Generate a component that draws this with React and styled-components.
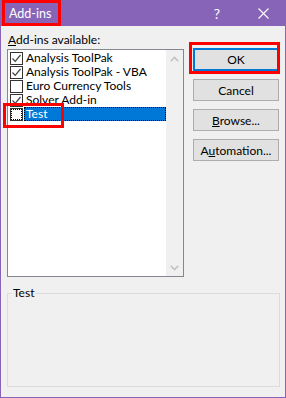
import React from "react";
import styled, { createGlobalStyle } from "styled-components";

const GlobalStyle = createGlobalStyle`
  html, body {
    margin: 0;
    padding: 0;
    background: #f0f0f0;
  }
  * {
    box-sizing: border-box;
  }
`;

const Window = styled.div`
  width: 286px;
  height: 398px;
  display: flex;
  flex-direction: column;
  background: #f0f0f0;
  border: 1px solid #8764b8;
  border-top: none;
  font-family: "Segoe UI", Lato, "Noto Sans", sans-serif;
  font-size: 12px;
  color: #000;
`;

const TitleBar = styled.div`
  height: 31px;
  margin: 0 -1px;
  background: #8764b8;
  color: #fff;
  display: flex;
  align-items: stretch;
  padding-left: 2px;
`;

const Highlight = styled.span`
  position: relative;
  display: flex;
  align-items: center;
  &::after {
    content: "";
    position: absolute;
    left: ${(p) => p.$l}px;
    top: ${(p) => p.$t}px;
    right: ${(p) => p.$r}px;
    bottom: ${(p) => p.$b}px;
    border: 3px solid #ff0000;
    pointer-events: none;
  }
`;

const Title = styled.span`
  padding: 0 10px 0 7px;
  font-size: 12.5px;
`;

const TitleButtons = styled.div`
  margin-left: auto;
  display: flex;
  align-items: center;
`;

const TitleButton = styled.span`
  width: 46px;
  display: flex;
  justify-content: center;
  align-items: center;
  font-size: 14px;
`;

const Body = styled.div`
  flex: 1;
  display: flex;
  flex-direction: column;
  padding: 7px 6px 10px 6px;
`;

const Main = styled.div`
  display: flex;
  gap: 9px;
`;

const LeftColumn = styled.div`
  display: flex;
  flex-direction: column;
`;

const Label = styled.div`
  height: 16px;
  line-height: 14px;
  padding-left: 1px;
`;

const U = styled.span`
  text-decoration: underline;
  text-underline-offset: 1px;
`;

const ListBox = styled.div`
  width: 177px;
  height: 228px;
  border: 1px solid #828790;
  background: #fff;
  display: flex;
`;

const Items = styled.div`
  flex: 1;
  padding: 1px 0 0 2px;
`;

const Item = styled.div`
  position: relative;
  height: 14px;
  display: flex;
  align-items: center;
`;

const CheckBox = styled.span`
  width: 13px;
  height: 13px;
  border: 1px solid #333;
  background: #fff;
  margin-right: 1px;
  display: flex;
  align-items: center;
  justify-content: center;
  flex-shrink: 0;
  outline: ${(p) => (p.$focus ? "1px dotted #000" : "none")};
  outline-offset: -2px;
`;

const ItemText = styled.span`
  flex: 1;
  height: 14px;
  line-height: 14px;
  padding-left: 2px;
  background: ${(p) => (p.$selected ? "#0078d7" : "transparent")};
  color: ${(p) => (p.$selected ? "#fff" : "#000")};
  outline: ${(p) => (p.$selected ? "1px dotted #000" : "none")};
  outline-offset: -1px;
`;

const AnnotationBox = styled.span`
  position: absolute;
  left: -7px;
  top: -4px;
  width: 61px;
  height: 25px;
  border: 3px solid #ff0000;
`;

const ScrollBar = styled.div`
  width: 17px;
  background: #f0f0f0;
  display: flex;
  flex-direction: column;
  justify-content: space-between;
  align-items: center;
  padding: 6px 0 5px;
`;

const RightColumn = styled.div`
  display: flex;
  flex-direction: column;
  gap: 8px;
  padding-top: 15px;
`;

const Button = styled.button`
  width: 86px;
  height: ${(p) => (p.$default ? 23 : 22)}px;
  background: #e1e1e1;
  border: ${(p) => (p.$default ? "2px solid #0078d7" : "1px solid #adadad")};
  font-family: inherit;
  font-size: 12px;
  color: #000;
  padding: 0;
  display: flex;
  align-items: center;
  justify-content: center;
`;

const GroupBox = styled.fieldset`
  margin: 10px 0 0;
  padding: 0;
  width: 273px;
  height: 100px;
  border: 1px solid #dcdcdc;
  border-radius: 0;
  & > legend {
    margin-left: 4px;
    padding: 0 1px;
    line-height: 12px;
    font-size: 12px;
  }
`;

const Check = () => (
  <svg width="11" height="11" viewBox="0 0 11 11">
    <path d="M1.5 5.5 L4.2 8.3 L9.5 2" fill="none" stroke="#404040" strokeWidth="1.2" />
  </svg>
);

const Chevron = ({ up }) => (
  <svg width="9" height="6" viewBox="0 0 9 6">
    <path
      d={up ? "M0.8 5.2 L4.5 1.5 L8.2 5.2" : "M0.8 0.8 L4.5 4.5 L8.2 0.8"}
      fill="none"
      stroke="#c2c2c2"
      strokeWidth="1.6"
    />
  </svg>
);

const items = [
  { name: "Analysis ToolPak", checked: true },
  { name: "Analysis ToolPak - VBA", checked: true },
  { name: "Euro Currency Tools", checked: false },
  { name: "Solver Add-in", checked: true },
  { name: "Test", checked: false, selected: true },
];

const App = () => (
  <>
    <GlobalStyle />
    <Window>
      <TitleBar>
        <Highlight $l={0} $t={0} $r={0} $b={0}>
          <Title>Add-ins</Title>
        </Highlight>
        <TitleButtons>
          <TitleButton>?</TitleButton>
          <TitleButton>
            <svg width="11" height="11" viewBox="0 0 11 11">
              <path d="M0.5 0.5 L10.5 10.5 M10.5 0.5 L0.5 10.5" stroke="#fff" strokeWidth="1.1" />
            </svg>
          </TitleButton>
        </TitleButtons>
      </TitleBar>
      <Body>
        <Main>
          <LeftColumn>
            <Label>
              <U>A</U>dd-ins available:
            </Label>
            <ListBox>
              <Items>
                {items.map((it) => (
                  <Item key={it.name}>
                    {it.selected && <AnnotationBox />}
                    <CheckBox $focus={it.selected}>{it.checked && <Check />}</CheckBox>
                    <ItemText $selected={it.selected}>{it.name}</ItemText>
                  </Item>
                ))}
              </Items>
              <ScrollBar>
                <Chevron up />
                <Chevron />
              </ScrollBar>
            </ListBox>
          </LeftColumn>
          <RightColumn>
            <Highlight $l={-4} $t={-6} $r={-1} $b={-3}>
              <Button $default>OK</Button>
            </Highlight>
            <Button>Cancel</Button>
            <Button>
              <span>
                <U>B</U>rowse...
              </span>
            </Button>
            <Button>
              <span>
                A<U>u</U>tomation...
              </span>
            </Button>
          </RightColumn>
        </Main>
        <GroupBox>
          <legend>Test</legend>
        </GroupBox>
      </Body>
    </Window>
  </>
);

export default App;
